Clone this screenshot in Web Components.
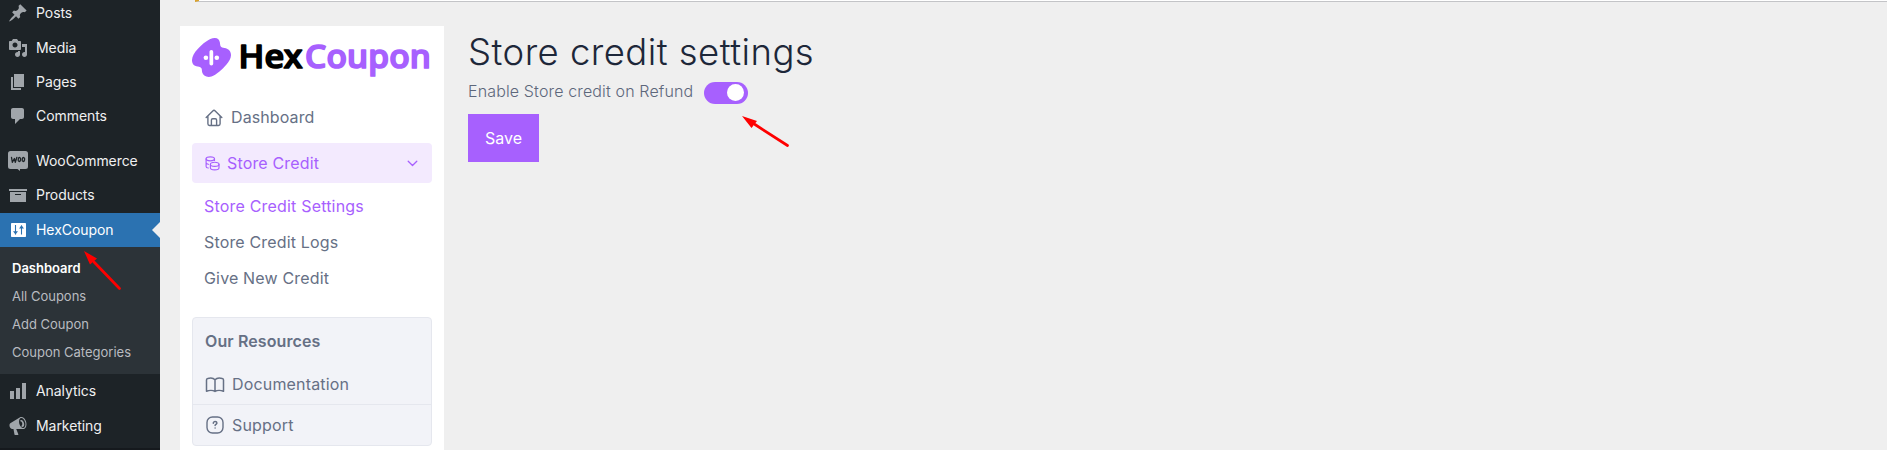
<!DOCTYPE html>
<html lang="en"><head><meta charset="utf-8"><title>HexCoupon</title>
<style>html,body{margin:0;height:450px;overflow:hidden;background:#efefef}body{font-family:Inter,"Liberation Sans",sans-serif}</style></head>
<body><hex-app></hex-app>
<script>
const ICONS={
posts:'<svg width="20" height="20" viewBox="0 0 20 20"><path fill="currentColor" d="M10.44 3.02l1.82-1.82 6.36 6.35-1.83 1.82c-1.05-.68-2.48-.57-3.41.36l-.75.75c-.92.93-1.04 2.35-.35 3.41l-1.83 1.82-2.41-2.41-2.8 2.79c-.42.42-3.38 2.71-3.8 2.29s1.86-3.39 2.28-3.81l2.79-2.79L4.1 9.36l1.83-1.82c1.05.69 2.48.57 3.4-.36l.75-.75c.93-.92 1.05-2.35.36-3.41z"/></svg>',
media:'<svg width="20" height="20" viewBox="0 0 20 20"><path fill="currentColor" fill-rule="evenodd" d="M13 11V4c0-.55-.45-1-1-1h-1.670L9 1H5L3.670 3H2c-.55 0-1 .45-1 1v7c0 .55.45 1 1 1h10c.55 0 1-.45 1-1zM7 4.500c1.380 0 2.500 1.120 2.500 2.500S8.380 9.500 7 9.500 4.500 8.380 4.500 7 5.620 4.500 7 4.500zM14 6h5v10.500c0 1.380-1.120 2.500-2.500 2.500S14 17.880 14 16.500s1.120-2.500 2.500-2.500c.17 0 .34.020.5.050V9h-3V6zm-4 8.050V13h2v3.500c0 1.380-1.120 2.500-2.500 2.500S7 17.880 7 16.500 8.120 14 9.500 14c.17 0 .34.020.5.050z"/></svg>',
pages:'<svg width="20" height="20" viewBox="0 0 20 20"><path fill="currentColor" d="M6 15V2h10v13H6zm-1 1h8v2H3V5h2v11z"/></svg>',
comments:'<svg width="20" height="20" viewBox="0 0 20 20"><path fill="currentColor" d="M5 2h9c1.100 0 2 .9 2 2v7c0 1.100-.9 2-2 2h-2l-5 5v-5H5c-1.100 0-2-.9-2-2V4c0-1.100.9-2 2-2z"/></svg>',
woo:'<svg width="20" height="20" viewBox="0 0 20 20"><path fill="currentColor" d="M2.500 0h15A2.500 2.500 0 0 1 20 2.500v13a2.500 2.500 0 0 1-2.500 2.500H12v2L9.500 18h-7A2.500 2.500 0 0 1 0 15.500v-13A2.500 2.500 0 0 1 2.500 0z"/><g fill="none" stroke="#1d2327" stroke-width="1.300" stroke-linecap="round" stroke-linejoin="round"><path d="M3.500 6.300l.9 5 2-3.800.9 3.800 1.600-5"/><ellipse cx="11.400" cy="8.500" rx="1.200" ry="2" transform="rotate(12 11.400 8.500)"/><ellipse cx="15.400" cy="8.500" rx="1.200" ry="2" transform="rotate(12 15.400 8.500)"/></g></svg>',
products:'<svg width="20" height="20" viewBox="0 0 20 20"><path fill="currentColor" fill-rule="evenodd" d="M19 4v2H1V4h18zM2 7h16v10H2V7zm11 3V9H7v1h6z"/></svg>',
hex:'<svg width="20" height="20" viewBox="0 0 20 20"><rect x="3" y="3" width="15" height="14" rx=".7" fill="#fff"/><path d="M7.500 5v9.500M13.500 5.500v9" stroke="#2b72b1" stroke-width="1.100"/><path d="M5 11.200h5l-2.500 3.300zM11 8.500h5l-2.500-3.300z" fill="#2b72b1"/></svg>',
analytics:'<svg width="20" height="20" viewBox="0 0 20 20"><path fill="currentColor" d="M18 18V2h-4v16h4zm-6 0V7H8v11h4zm-6 0v-8H2v8h4z"/></svg>',
marketing:'<svg width="20" height="20" viewBox="0 0 20 20"><path fill="currentColor" fill-rule="evenodd" d="M18.150 5.940c.46 1.620.38 3.220-.02 4.480-.42 1.280-1.260 2.180-2.300 2.480-.16.060-.26.060-.4.060-.06.020-.12.020-.18.020-.06.020-.14.020-.22.020h-6.800l2.220 5.500c.02.140-.06.260-.14.340-.08.100-.24.160-.34.160H6.950c-.1 0-.26-.06-.34-.16-.08-.08-.16-.2-.14-.34l-1-5.500H4.250l-.02-.02c-.5.060-1.080-.18-1.540-.62s-.88-1.080-1.060-1.880c-.24-.8-.2-1.560-.02-2.200.18-.62.580-1.080 1.060-1.300l.02-.02 9-5.400c.1-.06.180-.1.240-.16.060-.04.140-.08.240-.12.160-.08.280-.12.500-.18 1.040-.3 2.240.1 3.220.98s1.840 2.240 2.260 3.860zm-2.580 5.980h-.02c.4-.1.740-.34 1.040-.7.580-.7.860-1.760.86-3.040 0-.64-.1-1.300-.28-1.980-.34-1.360-1.020-2.500-1.780-3.240s-1.680-1.100-2.460-.88c-.82.220-1.400.96-1.700 2-.32 1.040-.28 2.360.06 3.720.38 1.360 1 2.500 1.800 3.240.78.740 1.620 1.100 2.480.88zm-2.540-7.860c.56-.14 1.180.1 1.720.62s1.020 1.340 1.260 2.280c.24.960.28 1.880.06 2.620-.22.720-.62 1.240-1.180 1.400-.56.140-1.200-.3-1.740-.82 1-.76 1.380-1.900 1-3.100-.4-1.300-1.200-1.860-2.300-1.700.2-.72.620-1.160 1.180-1.300z"/></svg>',
home:'<svg width="18" height="18" viewBox="0 0 18 18" fill="none" stroke="currentColor" stroke-width="1.400" stroke-linejoin="round" stroke-linecap="round"><path d="M1.200 8.500 7.800 1.900a1.700 1.700 0 0 1 2.400 0l6.600 6.600M2.900 7v7.800c0 1 .6 1.700 1.600 1.700h9c1 0 1.600-.7 1.600-1.700V7M6.400 16.300V11c0-.8.500-1.300 1.300-1.300h2.600c.8 0 1.300.5 1.300 1.300v5.300"/></svg>',
coins:'<svg width="15" height="15" viewBox="0 0 15 15" fill="none" stroke="currentColor" stroke-width="1.150" stroke-linecap="round"><ellipse cx="5.300" cy="2.800" rx="4.200" ry="2"/><path d="M1.100 2.800v7.600c0 .8.800 1.400 2.200 1.600M1.100 6.600c0 .9.900 1.500 2.300 1.700M9.500 2.800v1.700"/><ellipse cx="9.700" cy="8.300" rx="4.300" ry="2.100"/><path d="M5.400 8.300v3.400c0 1.200 1.900 2.100 4.300 2.100s4.300-.9 4.300-2.100V8.300"/></svg>',
chevron:'<svg width="11" height="7" viewBox="0 0 11 7" fill="none" stroke="currentColor" stroke-width="1.300" stroke-linecap="round" stroke-linejoin="round"><path d="M1.200 1.200 5.500 5.500l4.300-4.300"/></svg>',
book:'<svg width="20" height="16" viewBox="0 0 20 16" fill="none" stroke="currentColor" stroke-width="1.500" stroke-linejoin="round" stroke-linecap="round"><path d="M10 2.800C8.500 1.100 5 .8 2.700 1.500c-.9.200-1.200.7-1.200 1.500v11.300c2.400-1.200 6.400-1.300 8.500.1 2.100-1.400 6.100-1.300 8.500-.1V3c0-.8-.3-1.300-1.200-1.500C15 .8 11.500 1.100 10 2.800zM10 2.800v11.600"/></svg>',
support:'<svg width="18" height="18" viewBox="0 0 18 18" fill="none" stroke="currentColor" stroke-width="1.400" stroke-linecap="round" stroke-linejoin="round"><rect x="1" y="1" width="16" height="16" rx="5.500"/><path stroke-width="1.500" d="M7.300 7.200c0-2.200 3.600-2 3.600-.1 0 1.300-1.800 1.300-1.800 2.500M9.100 11.900v.1"/></svg>'
};
function define(name,html){customElements.define(name,class extends HTMLElement{constructor(){super();const r=this.attachShadow({mode:'open'});const t=document.createElement('template');t.innerHTML=html;r.append(t.content.cloneNode(true));}});}
customElements.define('hex-icon',class extends HTMLElement{constructor(){super();this.attachShadow({mode:'open'});}
connectedCallback(){this.shadowRoot.innerHTML='<style>:host{display:block;flex:none}svg{display:block}</style>'+ICONS[this.getAttribute('name')];}});

customElements.define('admin-item',class extends HTMLElement{constructor(){super();this.attachShadow({mode:'open'});}
connectedCallback(){this.shadowRoot.innerHTML=`<style>:host{display:flex;align-items:center;height:34px;padding-left:8px;color:#f0f0f1;font-size:14px;letter-spacing:-.06px;position:relative}
hex-icon{color:#a0a5aa;margin-right:8px}span{padding-bottom:2px}
:host([active]){background:#2b72b1;color:#fff}
:host([active])::after{content:"";position:absolute;right:0;top:9px;border:8px solid transparent;border-left:0;border-right-color:#efefef}</style>
<hex-icon name="${this.getAttribute('icon')}"></hex-icon><span><slot></slot></span>`;}});

define('admin-menu',`<style>:host{display:block;width:160px;height:450px;background:#1d2327;overflow:hidden}
nav{margin-top:-4px;display:flex;flex-direction:column}
.gap{height:11px}.one{height:1px}
.sub{background:#2c3338;height:127px;box-sizing:border-box;padding:7px 0 0 12px;font-size:13px;color:#b9bcc0}
.sub div{height:28px;line-height:28px}.sub .on{color:#fff;font-weight:600}
.next{margin-top:5px;height:8px;background:#15191d}</style>
<nav><admin-item icon="posts">Posts</admin-item><div class="one"></div><admin-item icon="media">Media</admin-item><admin-item icon="pages">Pages</admin-item><admin-item icon="comments">Comments</admin-item><div class="gap"></div>
<admin-item icon="woo">WooCommerce</admin-item><admin-item icon="products">Products</admin-item><div class="one"></div><admin-item icon="hex" active>HexCoupon</admin-item>
<div class="sub"><div class="on">Dashboard</div><div>All Coupons</div><div>Add Coupon</div><div>Coupon Categories</div></div>
<admin-item icon="analytics">Analytics</admin-item><div class="one"></div><admin-item icon="marketing">Marketing</admin-item><div class="next"></div></nav>`);

define('hex-logo',`<style>:host{display:block;height:52px}svg{display:block}text{font-family:"Noto Sans","Open Sans",sans-serif;font-size:32.500px;font-weight:500;stroke-width:1.700;stroke-linejoin:round}</style>
<svg width="244" height="52" viewBox="0 -8 244 52"><path fill="#a760fe" d="M22.700 1c3-.1 4.800 2 5.200 4.500.3 2.500.3 4.200 2.200 5.100 1.500.6 3.300.3 5.300 1.300 2.600 1.300 3.700 3.700 3.600 6.300-.2 3.500-2 6.300-4.500 9.300C30.500 32.200 24 38 19.500 39.500c-4.500 1.400-8.700-.8-9.500-5-.2-1.800.1-3.300-1.700-4.300-1.500-.8-3.500-.4-5.300-1.400C.9 27.600-.1 25.700 0 23c.2-4 2.300-7.300 5.500-10.800C10.500 6.700 17 1.300 22.700 1z"/><g fill="#fff"><rect x="17.500" y="13" width="3.700" height="15.500" rx="1.800"/><circle cx="13.900" cy="20.700" r="2.300"/><circle cx="24.800" cy="20.700" r="2.300"/></g>
<text x="46.500" y="30.700" textLength="64" lengthAdjust="spacingAndGlyphs" fill="#000" stroke="#000">Hex</text><text x="113" y="30.700" textLength="126" lengthAdjust="spacingAndGlyphs" fill="#a760fe" stroke="#a760fe">Coupon</text></svg>`);

define('hex-resources',`<style>:host{display:block;box-sizing:border-box;width:240px;height:129px;border:1px solid #e5e7ee;border-radius:4px;background:#f2f3f8;color:#667085;font-size:16px}
b{display:flex;align-items:center;box-sizing:border-box;height:48px;padding:0 0 2px 12px;font-weight:600;letter-spacing:.1px}
.r{display:flex;align-items:center;height:38px;padding-left:12px}.r hex-icon{width:20px;margin-right:7px}.r span{padding-bottom:2px}.r.s span{padding-bottom:0}.r.s{height:40px;border-top:1px solid #e5e7ee}.s hex-icon{padding-left:1px;width:19px}</style>
<b>Our Resources</b><div class="r"><hex-icon name="book"></hex-icon><span>Documentation</span></div><div class="r s"><hex-icon name="support"></hex-icon><span>Support</span></div>`);

define('coupon-panel',`<style>:host{display:block;box-sizing:border-box;width:264px;height:424px;padding:3px 12px 0;background:#fff;color:#667085;font-size:16px;letter-spacing:.16px}
.dash{display:flex;align-items:center;height:40px;margin-top:17px;padding-left:13px;gap:8px}.dash span{padding-bottom:2px;letter-spacing:.1px}
.credit{display:flex;align-items:center;height:40px;margin-top:5px;padding:0 14px 0 13px;box-sizing:border-box;background:#f3eafe;color:#a760fe;border-radius:4px}
.credit span{margin-left:7px;flex:1}
.links{padding:5px 0 0 12px}.links div{height:36px;line-height:36px}.links .on{color:#a760fe;letter-spacing:.19px}
hex-resources{margin-top:21px}</style>
<hex-logo></hex-logo><div class="dash"><hex-icon name="home"></hex-icon><span>Dashboard</span></div>
<div class="credit"><hex-icon name="coins"></hex-icon><span>Store Credit</span><hex-icon name="chevron"></hex-icon></div>
<div class="links"><div class="on">Store Credit Settings</div><div>Store Credit Logs</div><div>Give New Credit</div></div><hex-resources></hex-resources>`);

define('hex-toggle',`<style>:host{display:flex;align-items:center;justify-content:flex-end;box-sizing:border-box;width:44px;height:22px;padding:0 4px 1px 0;border-radius:11px;background:#a760fe}i{width:17px;height:17px;border-radius:50%;background:#fff}</style><i></i>`);

define('credit-settings',`<style>:host{display:block;padding-top:30px}
h1{margin:0;font-size:36.500px;line-height:44px;font-weight:300;letter-spacing:.45px;color:#1d2739}
.row{display:flex;align-items:center;height:22px;margin-top:8px;font-size:16px;font-weight:300;letter-spacing:.14px;color:#5d677b}.row span{width:236px;white-space:nowrap;padding-bottom:4px}
button{display:block;margin:10px 0 0;width:71px;height:48px;border:0;background:#a760fe;color:#fff;font:400 16px Inter,sans-serif;padding:0 0 1px}</style>
<h1>Store credit settings</h1><div class="row"><span>Enable Store credit on Refund</span><hex-toggle></hex-toggle></div><button>Save</button>`);

define('notice-edge',`<style>:host{display:block;box-sizing:border-box;height:2px;background:#fff;border-bottom:1px solid #c3c4c7;border-left:4px solid #dba32c}</style>`);

define('red-arrows',`<style>:host{position:absolute;inset:0;pointer-events:none}svg{display:block}</style>
<svg width="1887" height="450"><g fill="#fe0000" stroke="#fe0000"><path d="M94 262 119.500 288.500M755 124.500 787.500 145.500" stroke-width="2.700" stroke-linecap="round" fill="none"/><path stroke="none" d="M84 251 97 258.500 90 264.500zM742 116 757 121 751.500 128z"/></g></svg>`);

define('hex-app',`<style>:host{display:flex;width:1887px;height:450px;overflow:hidden;position:relative;background:#efefef}
main{flex:1;min-width:0}notice-edge{margin-left:35px}.cols{display:flex;gap:24px;padding:24px 0 0 20px}credit-settings{padding-top:4px}</style>
<admin-menu></admin-menu><main><notice-edge></notice-edge><div class="cols"><coupon-panel></coupon-panel><credit-settings></credit-settings></div></main><red-arrows></red-arrows>`);
</script></body></html>
